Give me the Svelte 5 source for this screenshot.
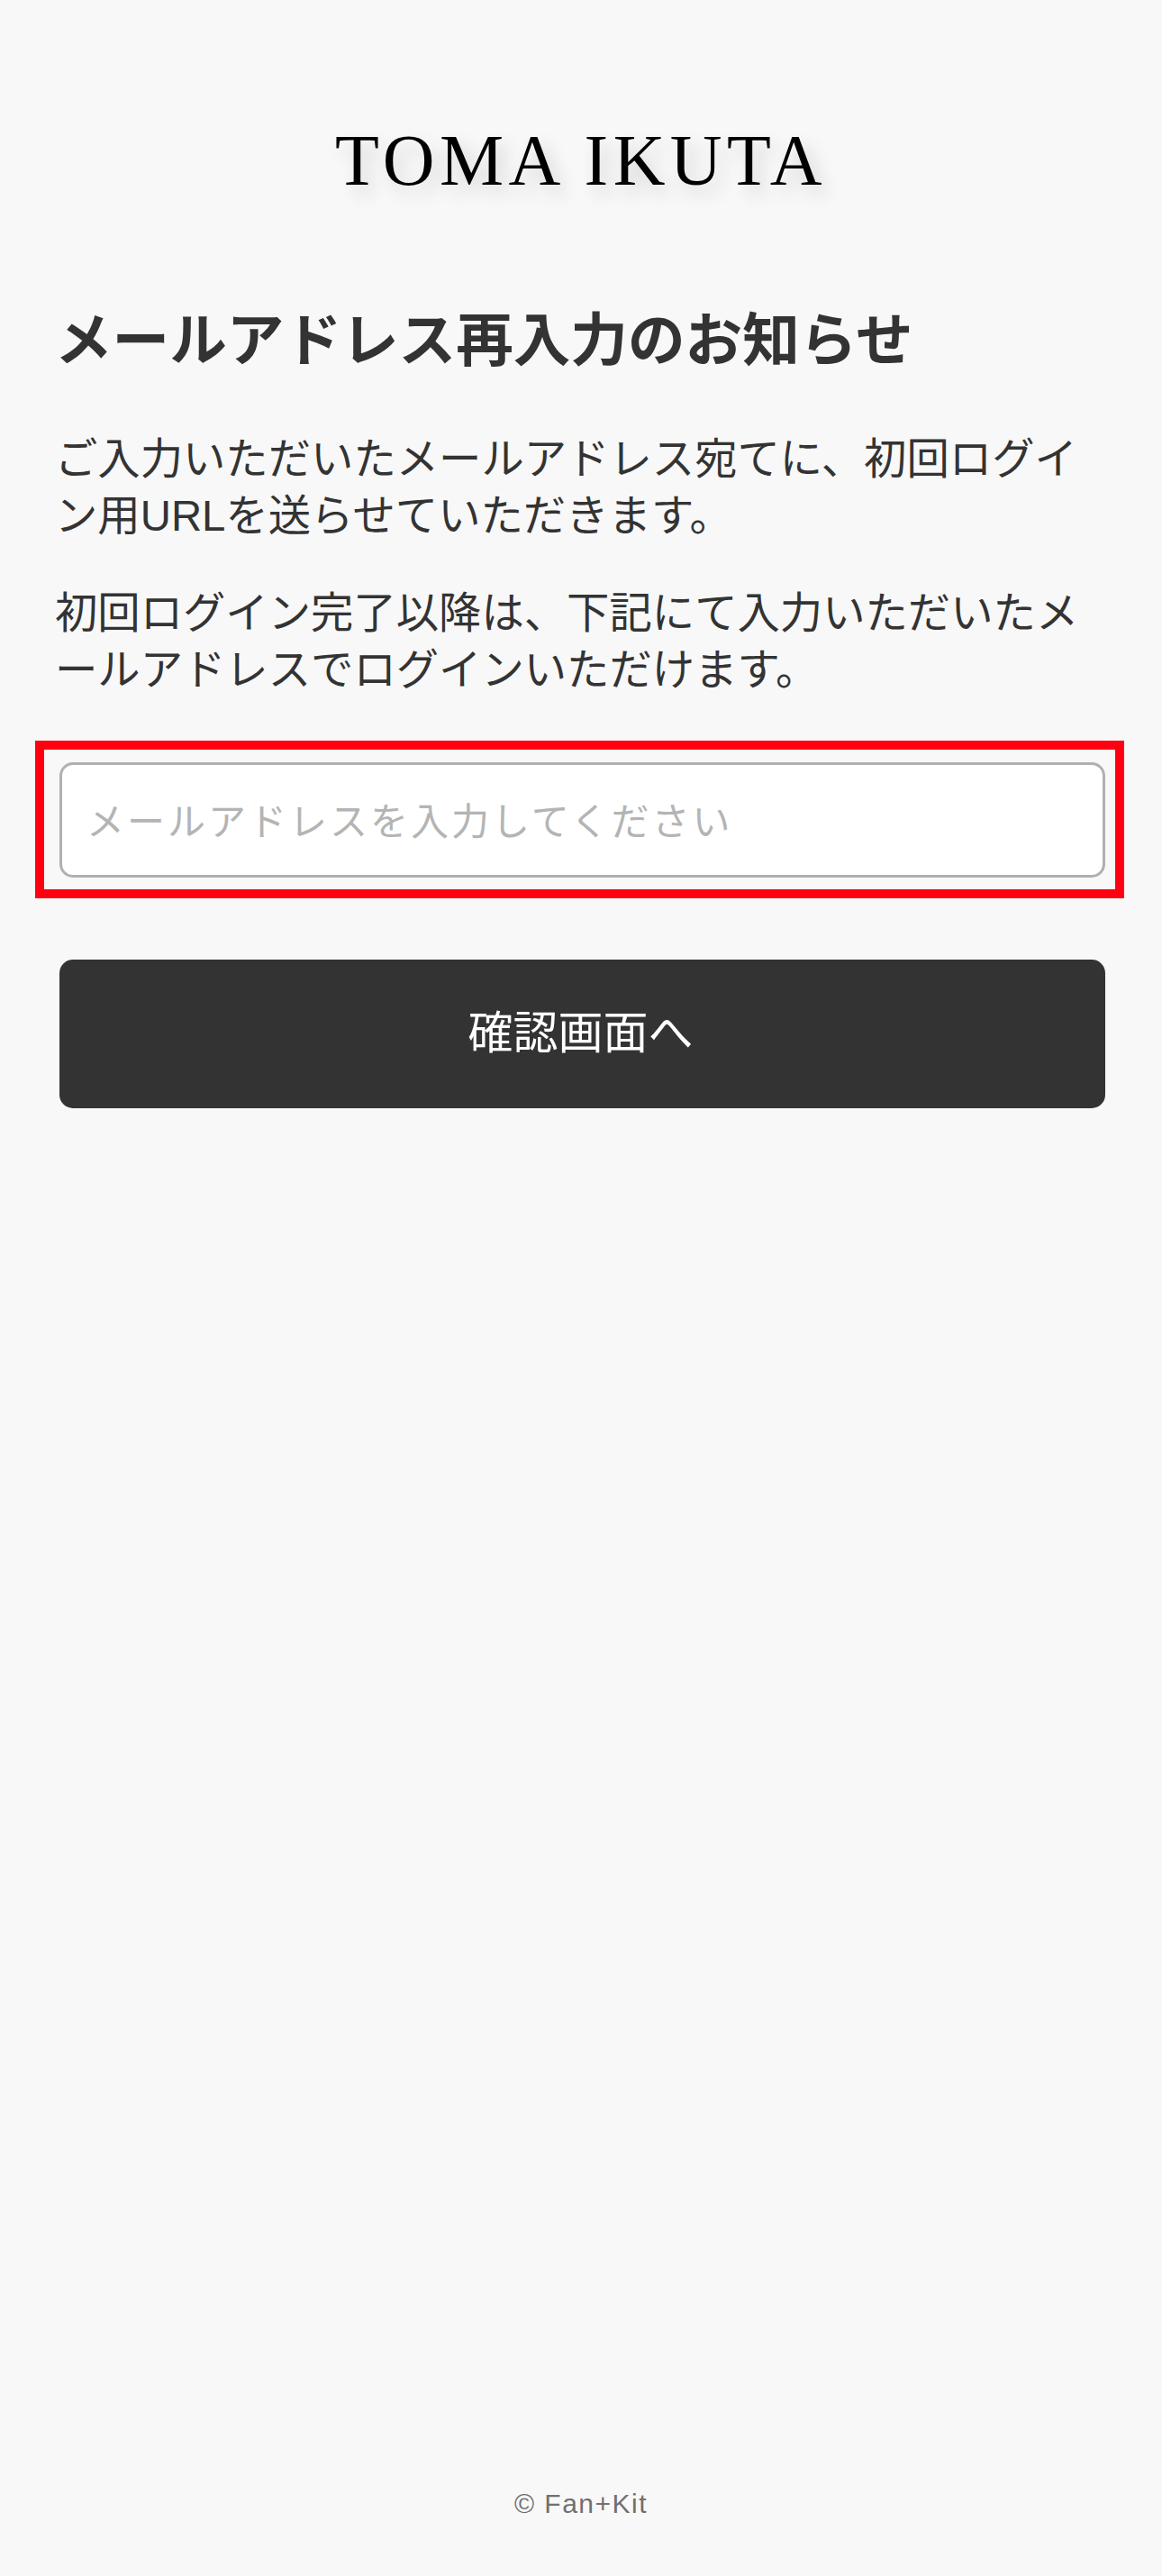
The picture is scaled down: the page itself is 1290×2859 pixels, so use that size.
<script>
  let email = $state('');
</script>

<div class="page">
  <header class="logo-wrap">
    <span class="logo">TOMA IKUTA</span>
  </header>
  <main class="content">
    <h1>メールアドレス再入力のお知らせ</h1>
    <p>ご入力いただいたメールアドレス宛てに、初回ログイン用URLを送らせていただきます。</p>
    <p>初回ログイン完了以降は、下記にて入力いただいたメールアドレスでログインいただけます。</p>
    <div class="form">
      <div class="highlight">
        <input type="email" placeholder="メールアドレスを入力してください" bind:value={email} />
      </div>
      <button type="button">確認画面へ</button>
    </div>
  </main>
  <footer>© Fan+Kit</footer>
</div>

<style>
  :global(body) {
    margin: 0;
    background: #f8f8f8;
  }
  .page {
    min-height: 2859px;
    box-sizing: border-box;
    display: flex;
    flex-direction: column;
    font-family: "Liberation Sans", "Noto Sans CJK JP", sans-serif;
    color: #333;
  }
  .logo-wrap {
    display: flex;
    justify-content: center;
    padding-top: 130px;
    height: 96px;
  }
  .logo {
    font-family: "Liberation Serif", serif;
    font-size: 80px;
    line-height: 96px;
    color: #000;
    letter-spacing: 5.4px;
    white-space: nowrap;
    text-shadow: 8px 10px 20px rgba(0, 0, 0, 0.16);
  }
  .content {
    flex: 1;
    padding: 110px 61px 0;
  }
  h1 {
    margin: 0 0 58px;
    font-size: 63.6px;
    line-height: 84px;
    font-weight: 700;
  }
  p {
    margin: 0 0 45px;
    font-size: 47.35px;
    line-height: 63px;
  }
  .form {
    margin: 47px 2px 0 5px;
  }
  .highlight {
    margin: 0 -21px 0 -27px;
    padding: 14px 11px 13px 17px;
    border: 10px solid #ff0011;
  }
  input {
    display: block;
    width: 100%;
    height: 128px;
    box-sizing: border-box;
    padding: 5px 27px 0;
    border: 3px solid #b0b0b0;
    border-radius: 15px;
    background: #fff;
    font: inherit;
    font-size: 42px;
    letter-spacing: 3px;
    color: #333;
    outline: none;
  }
  input::placeholder {
    color: #b4b4b4;
    opacity: 1;
  }
  button {
    display: block;
    width: 100%;
    height: 165px;
    margin-top: 68px;
    padding: 0 4px 12px 0;
    border: 0;
    border-radius: 15px;
    background: #333;
    color: #fff;
    font: inherit;
    font-size: 50px;
  }
  footer {
    padding-bottom: 60px;
    text-align: center;
    font-size: 30px;
    line-height: 40px;
    color: #707070;
    letter-spacing: 1.5px;
  }
</style>
